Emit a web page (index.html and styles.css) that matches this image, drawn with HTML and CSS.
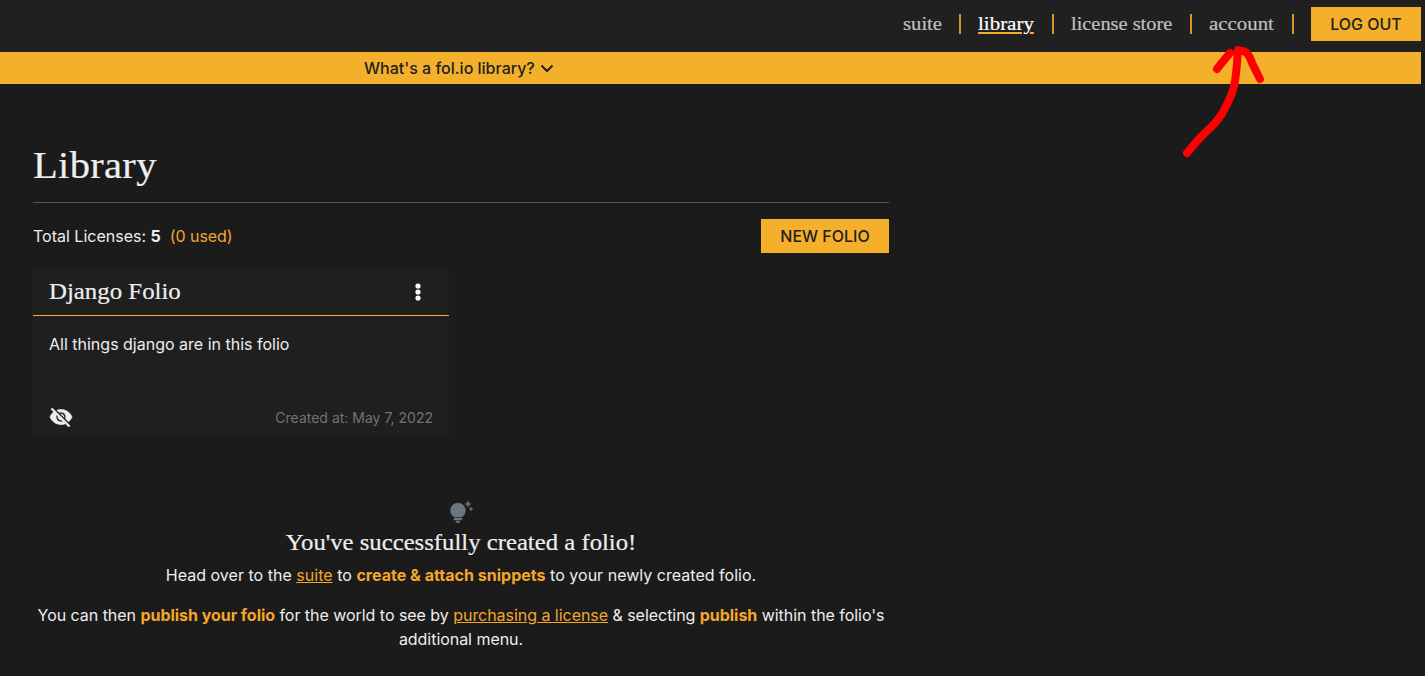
FILE: index.html
```html
<!DOCTYPE html>
<html lang="en">
<head>
<meta charset="utf-8">
<title>fol.io library</title>
<link rel="stylesheet" href="styles.css">
</head>
<body>
<header class="topbar">
  <nav class="nav">
    <a class="nav-link nav-suite">suite</a><span class="divider"></span>
    <a class="nav-link nav-library active">library</a><span class="divider"></span>
    <a class="nav-link nav-store">license store</a><span class="divider"></span>
    <a class="nav-link nav-account">account</a><span class="divider"></span>
  </nav>
  <button class="btn btn-logout">LOG OUT</button>
</header>
<div class="banner"><div class="banner-label">What's a fol.io library?
  <svg class="chevron" width="14" height="9" viewBox="0 0 14 9"><path d="M1.500 1.500l5.500 5.500 5.500-5.500" fill="none" stroke="#202020" stroke-width="2"/></svg></div>
</div>
<main class="content">
  <h1 class="title"><span class="title-text">Library</span></h1>
  <div class="toolbar">
    <div class="licenses">Total Licenses: <b>5</b><span class="used">(0 used)</span></div>
    <button class="btn btn-new">NEW FOLIO</button>
  </div>
  <article class="card">
    <div class="card-head">
      <h2 class="card-title">Django Folio</h2>
      <svg class="dots" width="6" height="18" viewBox="0 0 6 18" fill="#fff"><circle cx="3" cy="3" r="2.600"/><circle cx="3" cy="9" r="2.600"/><circle cx="3" cy="15" r="2.600"/></svg>
    </div>
    <div class="card-body">All things django are in this folio</div>
    <div class="card-foot">
      <svg width="24" height="24" viewBox="0 0 24 24" fill="#eee" stroke="#eee" stroke-width=".7"><path d="M12 7c2.76 0 5 2.24 5 5 0 .65-.13 1.26-.36 1.83l2.92 2.92c1.51-1.26 2.7-2.89 3.43-4.75-1.73-4.39-6-7.5-11-7.5-1.4 0-2.74.25-3.98.7l2.16 2.16C10.74 7.13 11.35 7 12 7zM2 4.27l2.28 2.28.46.46C3.08 8.3 1.78 10.02 1 12c1.73 4.39 6 7.5 11 7.5 1.55 0 3.03-.3 4.38-.84l.42.42L19.73 22 21 20.73 3.27 3 2 4.27zM7.53 9.8l1.55 1.55c-.05.21-.08.43-.08.65 0 1.66 1.34 3 3 3 .22 0 .44-.03.65-.08l1.55 1.55c-.67.33-1.41.53-2.2.53-2.76 0-5-2.24-5-5 0-.79.2-1.53.53-2.2zm4.31-.78l3.15 3.15.02-.16c0-1.66-1.34-3-3-3l-.17.01z"/></svg>
      <span class="created">Created at: May 7, 2022</span>
    </div>
  </article>
  <section class="tip">
    <svg class="bulb" width="24" height="24" viewBox="0 0 24 24" fill="#6c757d" stroke="#6c757d" stroke-width=".4"><path d="M7 20h4c0 1.100-.9 2-2 2s-2-.9-2-2zm-2-1h8v-2H5v2zm11.500-9.500c0 3.820-2.660 5.860-3.770 6.500H5.270c-1.110-.64-3.770-2.680-3.770-6.500C1.500 5.360 4.860 2 9 2s7.500 3.360 7.500 7.500zm4.870-2.130L20 8l1.370.63L22 10l.63-1.370L24 8l-1.370-.63L22 6l-.63 1.370zM19 6l.94-2.060L22 3l-2.060-.94L19 0l-.94 2.060L16 3l2.060.94L19 6z"/></svg>
    <h2 class="tip-title">You've successfully created a folio!</h2>
    <p class="tip-text tip-lead">Head over to the <a class="link">suite</a> to <b class="accent">create &amp; attach snippets</b> to your newly created folio.</p>
    <p class="tip-text tip-more">You can then <b class="accent">publish your folio</b> for the world to see by <a class="link">purchasing a license</a> &amp; selecting <b class="accent">publish</b> within the folio's additional menu.</p>
  </section>
</main>
<svg class="arrow" width="100" height="125" viewBox="1175 40 100 125" fill="none" stroke="#f00" stroke-width="8" stroke-linecap="round" stroke-linejoin="round"><path d="M1187 153C1194 145 1198 139 1207 131C1216 123 1222 116 1226 106C1235 90 1236 80 1238 50M1217 69C1222 62 1226 58 1230 53M1238 51C1246 50 1249 54 1252 63L1260 79"/></svg>
</body>
</html>
```
FILE: styles.css
```css
* { box-sizing: border-box; }
body {
  margin: 0;
  height: 676px;
  overflow: hidden;
  background: #1b1b1b;
  color: #eee;
  font: 16px/24px Inter, sans-serif;
}
.topbar {
  display: flex;
  justify-content: flex-end;
  height: 52px;
  padding: 7px 4px 0 0;
  background: #202020;
}
.nav { display: flex; gap: 18px; align-items: center; height: 34px; margin-right: 18px; }
.nav-link {
  font: 19.5px/24px "Liberation Serif", serif;
  color: #c0c0c0;
  white-space: nowrap;
  transform-origin: left;
  -webkit-text-stroke: .2px;
}
.nav-suite { width: 38px; transform: scaleX(1.06); }
.nav-library { width: 56px; transform: scaleX(1.075); }
.nav-store { width: 101px; transform: scaleX(1.045); }
.nav-account { width: 65px; transform: scaleX(1.07); }
.active {
  color: #fff;
  text-decoration: underline #f4b02a 2px;
  text-underline-offset: 2px;
}
.divider { flex: none; width: 2px; height: 20px; margin-right: -1px; background: #d9932a; }
.btn {
  height: 34px;
  padding: 0;
  border: 0;
  background: #f4b02a;
  color: #202020;
  font: 500 16px/34px Inter, sans-serif;
}
.btn-logout { width: 110px; }
.btn-new { width: 128px; }
.banner {
  width: 1421px;
  height: 32px;
  background: #f4b02a;
  color: #202020;
  font-weight: 500;
  line-height: 32px;
}
.banner-label { padding-left: 364px; }
.chevron { margin-left: 1px; vertical-align: 1px; }
.content { width: 856px; margin-left: 33px; }
.title {
  height: 119px;
  margin: 0;
  padding-top: 61px;
  border-bottom: 1px solid #555;
  font: 37.5px/42px "Liberation Serif", serif;
}
.title-text {
  display: inline-block;
  letter-spacing: .3px;
  transform: scaleX(1.08);
  transform-origin: left;
  -webkit-text-stroke: .2px;
}
.toolbar {
  display: flex;
  justify-content: space-between;
  align-items: center;
  margin: 16px 0;
}
.used { margin-left: 9px; color: #f4a62a; letter-spacing: -.05px; }
.card { width: 416px; height: 168px; background: #1f1f1f; }
.card-head {
  display: flex;
  justify-content: space-between;
  align-items: center;
  height: 47px;
  padding: 0 28px 0 16px;
  border-bottom: 1px solid #f4b02a;
}
.card-title {
  margin: 0 0 2px;
  font: 24px/28px "Liberation Serif", serif;
  transform: scaleX(1.035);
  transform-origin: left;
  -webkit-text-stroke: .2px;
}
.card-body { height: 80px; padding: 16px; }
.card-foot {
  display: flex;
  justify-content: space-between;
  align-items: center;
  height: 41px;
  padding: 0 16px;
  border-top: 1px solid #1b1b1b;
}
.created { padding-top: 2px; color: #6c757d; font-size: 14px; }
.tip { padding-top: 64px; text-align: center; }
.bulb { display: block; margin: 0 auto; }
.tip-title {
  margin: 3px 0 7px;
  font: 24px/28px "Liberation Serif", serif;
  transform: scaleX(1.03);
  -webkit-text-stroke: .2px;
}
.tip-text { margin: 0 0 16px; }
.tip-lead { letter-spacing: .02px; }
.tip-more { letter-spacing: -.04px; }
.accent { color: #f4a62a; }
.link { color: #f4a62a; text-decoration: underline; }
.arrow { position: absolute; left: 1175px; top: 40px; }
```
